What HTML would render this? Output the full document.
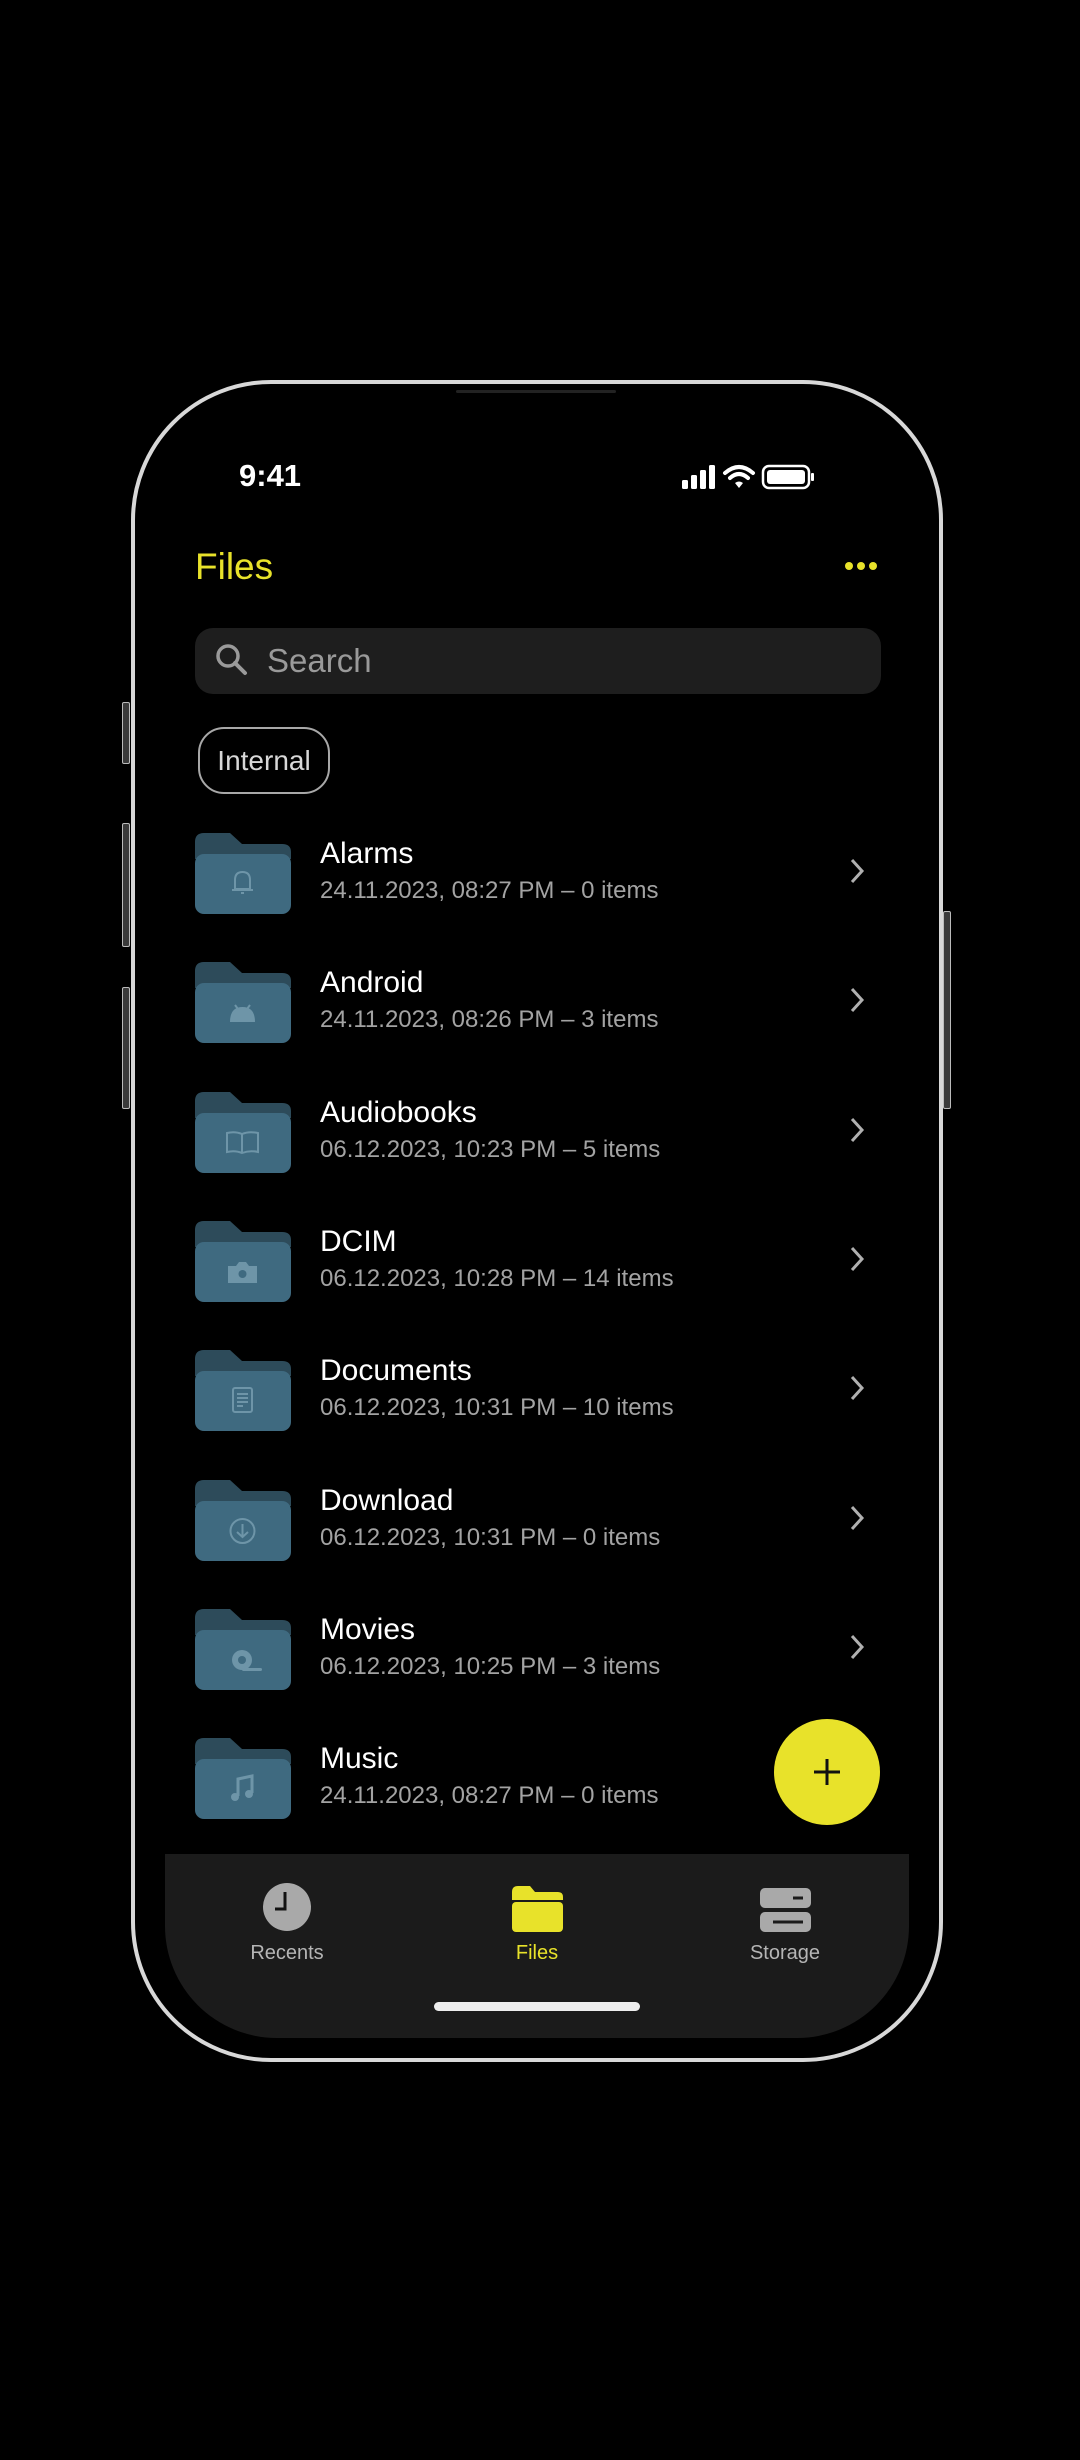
<!DOCTYPE html>
<html><head><meta charset="utf-8"><style>
*{margin:0;padding:0;box-sizing:border-box}
body{width:1080px;height:2460px;background:#000;position:relative;overflow:hidden;font-family:"Liberation Sans",sans-serif;color:#fff}
.abs{position:absolute}
.phone{left:131px;top:380px;width:812px;height:1682px;border:4px solid #d8d8d8;border-radius:140px}
.btn{background:#3a3a3a;border:1px solid #bbb;width:8px;border-radius:2px}
.row{position:absolute;left:195px;width:700px;height:82px}
.row .fold{position:absolute;left:0;top:0}
.name{position:absolute;left:125px;top:4px;font-size:30px;color:#fff}
.date{position:absolute;left:125px;top:44px;font-size:24px;color:#a3a3a3}
.row .chev{position:absolute;left:652px;top:23px}
</style></head><body>
<div class="abs btn" style="left:122px;top:702px;height:62px"></div>
<div class="abs btn" style="left:122px;top:823px;height:124px"></div>
<div class="abs btn" style="left:122px;top:987px;height:122px"></div>
<div class="abs btn" style="left:943px;top:911px;height:198px"></div>
<div class="abs phone"></div>
<div class="abs" style="left:456px;top:390px;width:160px;height:3px;background:#222;border-radius:2px"></div>

<div class="abs" style="left:239px;top:458px;font-size:31px;font-weight:bold">9:41</div>
<svg class="abs" style="left:682px;top:462px" width="150" height="30" viewBox="0 0 150 30">
<rect x="0" y="18" width="6" height="9" rx="1.5" fill="#fff"/><rect x="9" y="13" width="6" height="14" rx="1.5" fill="#fff"/><rect x="18" y="8" width="6" height="19" rx="1.5" fill="#fff"/><rect x="27" y="3" width="6" height="24" rx="1.5" fill="#fff"/>
<path d="M43 11 Q57 -1 71 11" stroke="#fff" stroke-width="4" fill="none" stroke-linecap="round"/><path d="M48 16 Q57 8 66 16" stroke="#fff" stroke-width="4" fill="none" stroke-linecap="round"/><path d="M53 21 L57 26 L61 21 Q57 18 53 21Z" fill="#fff"/>
<rect x="81" y="4" width="46" height="22" rx="6" fill="none" stroke="#fff" stroke-width="2.5"/><rect x="85" y="8" width="38" height="14" rx="3" fill="#fff"/><rect x="129" y="11" width="3" height="8" rx="1" fill="#fff"/>
</svg>

<div class="abs" style="left:195px;top:546px;font-size:37px;color:#e8e22a">Files</div>
<svg class="abs" style="left:845px;top:561px" width="32" height="10"><circle cx="4" cy="5" r="4" fill="#e8e22a"/><circle cx="16" cy="5" r="4" fill="#e8e22a"/><circle cx="28" cy="5" r="4" fill="#e8e22a"/></svg>

<div class="abs" style="left:195px;top:628px;width:686px;height:66px;background:#1e1e1e;border-radius:18px"></div>
<svg class="abs" style="left:214px;top:642px" width="36" height="36" viewBox="0 0 36 36"><circle cx="14" cy="14" r="10" stroke="#9a9a9a" stroke-width="3.5" fill="none"/><path d="M21 21 L31 31" stroke="#9a9a9a" stroke-width="4" stroke-linecap="round"/></svg>
<div class="abs" style="left:267px;top:642px;font-size:33px;color:#9a9a9a">Search</div>

<div class="abs" style="left:198px;top:727px;width:132px;height:67px;border:2px solid #a8a8a8;border-radius:26px;font-size:28px;color:#d8d8d8;text-align:center;line-height:63px">Internal</div>

<div id="rows"></div>

<div class="abs" style="left:165px;top:1854px;width:744px;height:184px;background:#1b1b1b;border-radius:0 0 112px 112px"></div>
<div class="abs" style="left:774px;top:1719px;width:106px;height:106px;border-radius:50%;background:#e8e22a"></div>
<svg class="abs" style="left:811px;top:1756px" width="32" height="32"><path d="M16 3V29M3 16H29" stroke="#111" stroke-width="3"/></svg>

<svg class="abs" style="left:262px;top:1882px" width="50" height="50"><circle cx="25" cy="25" r="24" fill="#a9a9a9"/><path d="M23 10V27H13" stroke="#111" stroke-width="3" fill="none"/></svg>
<svg class="abs" style="left:512px;top:1886px" width="52" height="46"><path d="M0 6Q0 0 6 0H18L23 6H46Q51 6 51 11V14H0Z" fill="#e8e22a"/><rect x="0" y="16" width="51" height="30" rx="4" fill="#e8e22a"/></svg>
<svg class="abs" style="left:760px;top:1888px" width="52" height="46"><rect x="0" y="0" width="51" height="20" rx="5" fill="#a9a9a9"/><rect x="0" y="24" width="51" height="20" rx="5" fill="#a9a9a9"/><path d="M33 10H43M13 34H43" stroke="#1b1b1b" stroke-width="3"/></svg>
<div class="abs" style="left:237px;top:1942px;width:100px;text-align:center;font-size:20px;color:#b5b5b5">Recents</div>
<div class="abs" style="left:487px;top:1942px;width:100px;text-align:center;font-size:20px;color:#e8e22a">Files</div>
<div class="abs" style="left:735px;top:1942px;width:100px;text-align:center;font-size:20px;color:#b5b5b5">Storage</div>
<div class="abs" style="left:434px;top:2002px;width:206px;height:9px;border-radius:5px;background:#eee"></div>

<script>
var data=[["Alarms","24.11.2023, 08:27 PM – 0 items",'<path d="M40 56V47Q40 39 47.5 39Q55 39 55 47V56H40Z M37 57H58 M46 60H49" stroke="#6e95a8" stroke-width="2" fill="none"/>'],
["Android","24.11.2023, 08:26 PM – 3 items",'<path d="M35 60Q35 45 47.5 45Q60 45 60 60Z" fill="#6e95a8"/><path d="M40 43L43 47M55 43L52 47" stroke="#6e95a8" stroke-width="2"/>'],
["Audiobooks","06.12.2023, 10:23 PM – 5 items",'<path d="M32 41Q40 39 47 42Q54 39 63 41V60Q55 58 47 61Q40 58 32 60Z M47 42V61" stroke="#6e95a8" stroke-width="2" fill="none"/>'],
["DCIM","06.12.2023, 10:28 PM – 14 items",'<path d="M33 45H41L44 41H51L54 45H62V62H33Z" fill="#6e95a8"/><circle cx="47.5" cy="53" r="4" fill="#3f6a80"/>'],
["Documents","06.12.2023, 10:31 PM – 10 items",'<rect x="38" y="38" width="19" height="24" rx="2" stroke="#6e95a8" stroke-width="2" fill="none"/><path d="M42 44H53M42 48H53M42 52H53M42 56H48" stroke="#6e95a8" stroke-width="2"/>'],
["Download","06.12.2023, 10:31 PM – 0 items",'<circle cx="47.5" cy="51" r="12" stroke="#6e95a8" stroke-width="2" fill="none"/><path d="M47.5 44V57M42 52L47.5 57L53 52" stroke="#6e95a8" stroke-width="2" fill="none"/>'],
["Movies","06.12.2023, 10:25 PM – 3 items",'<circle cx="47" cy="51" r="10" fill="#6e95a8"/><circle cx="47" cy="51" r="4" fill="#3f6a80"/><rect x="47" y="59" width="20" height="3" rx="1.5" fill="#6e95a8"/>'],
["Music","24.11.2023, 08:27 PM – 0 items",'<path d="M43 58V41L57 38V55" stroke="#6e95a8" stroke-width="3" fill="none"/><circle cx="40" cy="59" r="4" fill="#6e95a8"/><circle cx="54" cy="56" r="4" fill="#6e95a8"/>']];
var h="";
data.forEach(function(d,i){var t=Math.round(833+i*129.3);
h+='<div class="row" style="top:'+t+'px"><svg class="fold" width="96" height="82" viewBox="0 0 96 82"><path d="M0 9Q0 0 9 0H35L47 11H87Q96 11 96 19V26H0Z" fill="#2d4b5a"/><rect x="0" y="21" width="96" height="60" rx="9" fill="#3f6a80"/>'+d[2]+'</svg><div class="name">'+d[0]+'</div><div class="date">'+d[1]+'</div>'+(i<7?'<svg class="chev" width="20" height="30"><path d="M5 4L15 15L5 26" stroke="#b0b0b0" stroke-width="3" fill="none"/></svg>':'')+'</div>';});
document.getElementById("rows").outerHTML=h;
</script>
</body></html>
